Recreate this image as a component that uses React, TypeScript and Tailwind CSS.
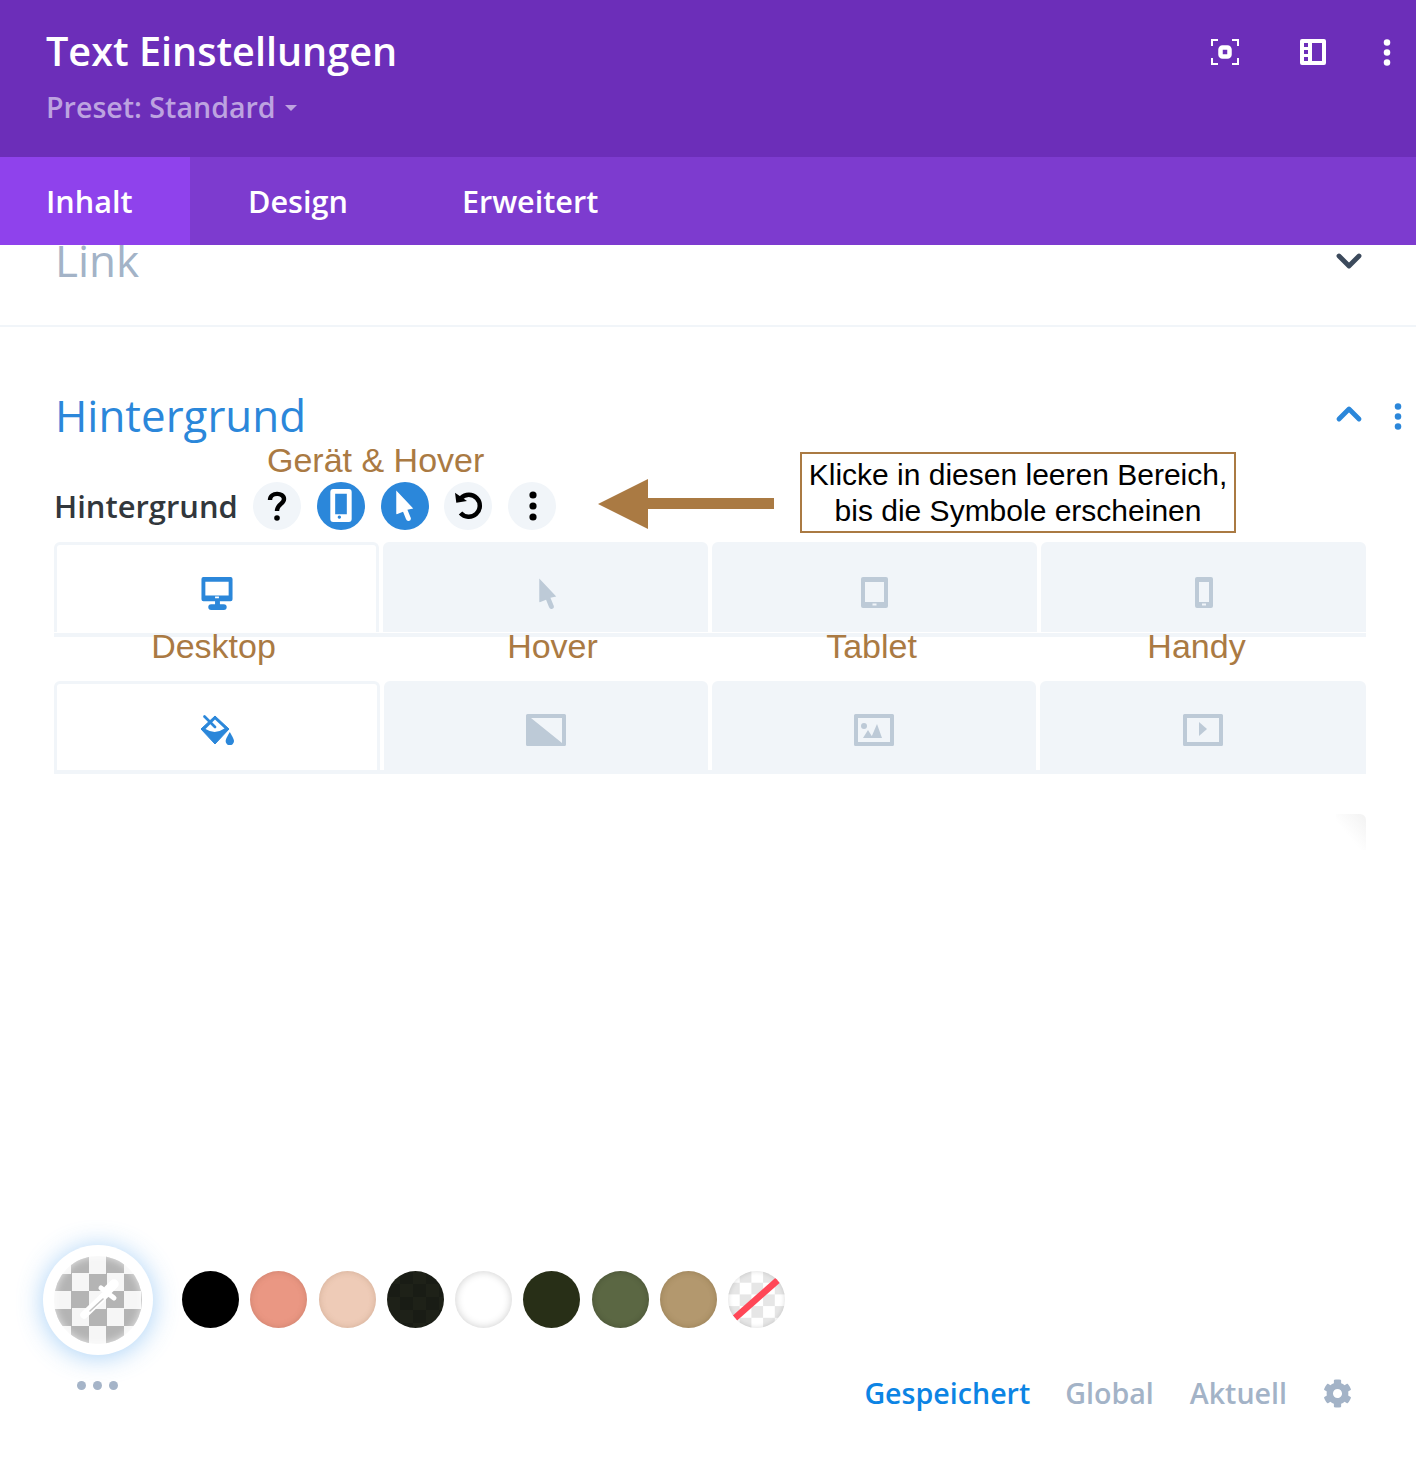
import { ChevronDown, ChevronUp } from 'lucide-react';
import { FaCog } from 'react-icons/fa';

const swatches = [
  { color: 'bg-[#000000]', shadow: '' },
  { color: 'bg-[#ea9783]', shadow: 'shadow-[inset_0_0_6px_rgba(150,90,70,0.35)]' },
  { color: 'bg-[#eecbb7]', shadow: 'shadow-[inset_0_0_6px_rgba(150,110,80,0.3)]' },
  { color: 'bg-[conic-gradient(#191c15_25%,#1e2118_0_50%,#191c15_0_75%,#1e2118_0)] bg-[length:26px_26px]', shadow: '' },
  { color: 'bg-[#ffffff]', shadow: 'shadow-[inset_0_0_8px_rgba(0,0,0,0.2)]' },
  { color: 'bg-[#282f17]', shadow: '' },
  { color: 'bg-[#5b6743]', shadow: 'shadow-[inset_0_0_6px_rgba(0,0,0,0.2)]' },
  { color: 'bg-[#b3986e]', shadow: 'shadow-[inset_0_0_6px_rgba(90,70,30,0.3)]' },
];

function Dots({ className }: { className: string }) {
  return (
    <svg viewBox="0 0 8 30" className={className} fill="currentColor">
      <circle cx="4" cy="4" r="3.6" />
      <circle cx="4" cy="15" r="3.6" />
      <circle cx="4" cy="26" r="3.6" />
    </svg>
  );
}

function CursorIcon({ className }: { className: string }) {
  return (
    <svg viewBox="0 0 20 34" className={className} fill="currentColor">
      <path d="M1 1.5 L18.5 20 L12.5 21.5 L16 30 Q16.5 32.5 14 33 Q12 33.5 11 31 L8 23.5 L1.5 26 Q1 26 1 25 Z" />
    </svg>
  );
}

function GreyFrame({ children }: { children: React.ReactNode }) {
  return (
    <svg viewBox="0 0 40 32" className="h-8 w-10 text-[#bdcad7]" fill="currentColor">
      <path fillRule="evenodd" d="M1.5 0h37A1.5 1.5 0 0 1 40 1.5v29a1.5 1.5 0 0 1-1.5 1.5h-37A1.5 1.5 0 0 1 0 30.5v-29A1.5 1.5 0 0 1 1.5 0ZM4 4v24h32V4Z" />
      {children}
    </svg>
  );
}

export default function App() {
  return (
    <div className="h-[1464px] w-full relative overflow-hidden bg-white font-['Open_Sans',sans-serif]">
      {/* Header */}
      <header className="h-[157px] bg-[#6c2eb9] pl-[46px] pr-[25px] flex justify-between">
        <div>
          <h1 className="mt-[25px] text-[39.6px] leading-[52px] font-semibold text-white">Text Einstellungen</h1>
          <div className="mt-[11px] flex items-center text-[28.6px] leading-[38px] font-semibold text-[#bda3e0]">
            Preset: Standard
            <span className="ml-[9px] mt-[1px] h-0 w-0 border-x-[6px] border-t-[6px] border-x-transparent border-t-[#bda3e0]" />
          </div>
        </div>
        <div className="mt-[38px] flex h-[28px] items-center text-white">
          <svg viewBox="0 0 28 28" className="h-[28px] w-[28px]" fill="none" stroke="currentColor" strokeWidth="2">
            <path d="M1 8V2h6M21 2h6v6M27 20v6h-6M7 26H1v-6" />
            <rect x="9.5" y="9.5" width="9" height="9" rx="2" strokeWidth="4.5" />
          </svg>
          <svg viewBox="0 0 28 28" className="ml-[60px] h-[28px] w-[28px]" fill="currentColor">
            <path fillRule="evenodd" d="M3 1h22a2 2 0 0 1 2 2v22a2 2 0 0 1-2 2H3a2 2 0 0 1-2-2V3a2 2 0 0 1 2-2Zm2 4v4h4V5Zm0 7v4h4v-4Zm0 7v4h4v-4Zm8-14v18h10V5Z" />
          </svg>
          <Dots className="ml-[56px] h-[27px] w-[8px]" />
        </div>
      </header>

      {/* Tabs */}
      <nav className="h-[88px] bg-[#7d3bcf] flex text-[30.6px] font-semibold text-white">
        <div className="w-[190px] bg-[#8f42ec] pl-[46px] leading-[88px]">Inhalt</div>
        <div className="ml-[58px] leading-[88px]">Design</div>
        <div className="ml-[114px] leading-[88px]">Erweitert</div>
      </nav>

      {/* Link section */}
      <section className="h-[82px] overflow-hidden border-b-2 border-[#f1f5f9] pl-[55px] pr-[50px] flex justify-between">
        <span className="-mt-[15px] text-[44px] leading-[60px] text-[#a3b3c7]">Link</span>
        <ChevronDown className="-mr-[3px] -mt-[4px] h-[40px] w-[40px] text-[#3c4a5c]" strokeWidth={2.9} />
      </section>

      {/* Background section */}
      <section className="pl-[54px] pr-[50px]">
        <div className="mt-[62px] flex h-[52px] items-center justify-between">
          <h2 className="ml-[1px] text-[43.9px] leading-[52px] text-[#2b87da]">Hintergrund</h2>
          <div className="flex items-center">
            <ChevronUp className="mb-[2px] h-[40px] w-[40px] text-[#2b87da]" strokeWidth={2.9} />
            <Dots className="-mr-[36px] ml-[25px] mt-[2px] h-[27px] w-[8px] text-[#2b87da]" />
          </div>
        </div>

        <div className="mt-[40px] flex h-[49px] items-center">
          <span className="mt-[2px] w-[199px] text-[30.9px] font-semibold text-[#32373c]">Hintergrund</span>
          <div className="flex gap-[16px]">
            <div className="flex h-[48px] w-[48px] items-center justify-center rounded-full bg-[#f1f5f9] text-black">
              <svg viewBox="0 0 20 30" className="h-[30px] w-[20px]" fill="none" stroke="currentColor" strokeWidth="4.4">
                <path d="M3 9C3 1 17 1 17 8c0 5-7 5-7 12" />
                <circle cx="10" cy="27" r="2.8" fill="currentColor" stroke="none" />
              </svg>
            </div>
            <div className="flex h-[48px] w-[48px] items-center justify-center rounded-full bg-[#2b87da] text-white">
              <svg viewBox="0 0 22 34" className="h-[33px] w-[22px]" fill="currentColor">
                <path fillRule="evenodd" d="M3 0h16a3 3 0 0 1 3 3v28a3 3 0 0 1-3 3H3a3 3 0 0 1-3-3V3a3 3 0 0 1 3-3Zm2 5v21h12V5Zm6 24a1.7 1.7 0 1 0 0 .01Z" />
              </svg>
            </div>
            <div className="flex h-[48px] w-[48px] items-center justify-center rounded-full bg-[#2b87da] text-white">
              <CursorIcon className="h-[33px] w-[20px]" />
            </div>
            <div className="-ml-[1px] flex h-[48px] w-[48px] items-center justify-center rounded-full bg-[#f1f5f9] pl-[1px] text-black">
              <svg viewBox="0 0 28 28" className="h-[28px] w-[28px]" fill="none" stroke="currentColor" strokeWidth="4.5">
                <path d="M6 6A11 11 0 1 1 5.5 21" />
                <path d="M0 .7l1.3 10L12 9Z" fill="currentColor" stroke="none" />
              </svg>
            </div>
            <div className="flex h-[48px] w-[48px] items-center justify-center rounded-full bg-[#f1f5f9] pl-[1px] text-black">
              <Dots className="h-[30px] w-[8px]" />
            </div>
          </div>
        </div>

        {/* Device tabs */}
        <div className="mt-[12px] grid grid-cols-4 gap-[4px] border-b-4 border-[#f1f5f9] pb-[1px]">
          <div className="flex h-[90px] justify-center rounded-t-md border-[3px] border-b-0 border-[#f1f5f9] bg-white pt-[32px] text-[#2b87da]">
            <svg viewBox="0 0 32 34" className="h-[33px] w-[32px]" fill="currentColor">
              <path fillRule="evenodd" d="M2 0h28a2 2 0 0 1 2 2v21a2 2 0 0 1-2 2H19v3h4q3 0 3 3t-3 3H10q-3 0-3-3t3-3h4v-3H2a2 2 0 0 1-2-2V2a2 2 0 0 1 2-2Zm2 5v14h24V5Zm10 17h4v-2h-4Z" />
            </svg>
          </div>
          <div className="flex h-[90px] justify-center rounded-t-md bg-[#f1f5f9] pl-[4px] pt-[35px] text-[#bdcad7]">
            <CursorIcon className="h-[33px] w-[20px]" />
          </div>
          <div className="flex h-[90px] justify-center rounded-t-md bg-[#f1f5f9] pt-[35px] text-[#bdcad7]">
            <svg viewBox="0 0 27 31" className="h-[31px] w-[27px]" fill="currentColor">
              <path fillRule="evenodd" d="M2 0h23a2 2 0 0 1 2 2v27a2 2 0 0 1-2 2H2a2 2 0 0 1-2-2V2a2 2 0 0 1 2-2Zm2 5v20h19V5Zm7.5 21.5v2h4v-2Z" />
            </svg>
          </div>
          <div className="flex h-[90px] justify-center rounded-t-md bg-[#f1f5f9] pt-[35px] text-[#bdcad7]">
            <svg viewBox="0 0 18 31" className="h-[31px] w-[18px]" fill="currentColor">
              <path fillRule="evenodd" d="M2 0h14a2 2 0 0 1 2 2v27a2 2 0 0 1-2 2H2a2 2 0 0 1-2-2V2a2 2 0 0 1 2-2Zm2 5v20h10V5Zm3 21.5v2h4v-2Z" />
            </svg>
          </div>
        </div>

        {/* Annotated labels */}
        <div className="-mt-[8px] grid h-[52px] grid-cols-4 gap-[4px] text-center font-['Liberation_Sans',sans-serif] text-[34px] leading-[34px] text-[#aa7a43]">
          <span className="relative -left-[3px]">Desktop</span>
          <span className="relative left-[7px]">Hover</span>
          <span className="relative -left-[3px]">Tablet</span>
          <span className="relative -left-[7px]">Handy</span>
        </div>

        {/* Background type tabs */}
        <div className="grid grid-cols-[326px_324px_324px_326px] gap-[4px] border-b-4 border-[#f1f5f9]">
          <div className="flex h-[89px] justify-center rounded-t-md border-[3px] border-b-0 border-[#f1f5f9] bg-white pt-[31px] text-[#2b87da]">
            <svg viewBox="0 0 33 30" className="h-[30px] w-[33px]" fill="currentColor">
              <path d="M14 1 28 14 14 29 0 14Z" stroke="currentColor" strokeWidth="1" strokeLinejoin="round" />
              <path d="M4.5 14 14 4.5 23.5 13.5Q14 20 4.5 14Z" fill="white" />
              <path d="M3.5 1.5 14 12" fill="none" stroke="currentColor" strokeWidth="2.6" strokeLinecap="round" />
              <path d="M28.8 17Q33 24 33 26a4.2 4.2 0 0 1-8.4 0Q24.6 24 28.8 17Z" />
            </svg>
          </div>
          <div className="flex h-[89px] justify-center rounded-t-md bg-[#f1f5f9] pt-[33px] pr-[1px]">
            <svg viewBox="0 0 40 32" className="h-8 w-10 text-[#bdcad7]" fill="currentColor">
              <path fillRule="evenodd" d="M1.5 0h37A1.5 1.5 0 0 1 40 1.5v29a1.5 1.5 0 0 1-1.5 1.5h-37A1.5 1.5 0 0 1 0 30.5v-29A1.5 1.5 0 0 1 1.5 0ZM5 4l31 25V4Z" />
            </svg>
          </div>
          <div className="flex h-[89px] justify-center rounded-t-md bg-[#f1f5f9] pt-[33px]">
            <GreyFrame>
              <circle cx="10" cy="12" r="3" />
              <path d="M9 24l5-8 5 8ZM17 24l6-14 5 14Z" />
            </GreyFrame>
          </div>
          <div className="flex h-[89px] justify-center rounded-t-md bg-[#f1f5f9] pt-[33px]">
            <GreyFrame>
              <path d="M16 9l8 7-8 7Z" transform="translate(0 -1)" />
            </GreyFrame>
          </div>
        </div>

        <div className="ml-auto mt-[40px] h-[36px] w-[30px] rounded-tr-md bg-[linear-gradient(to_bottom_left,#f2f2f2,#ffffff_60%)]" />
      </section>

      {/* Color palette */}
      <div className="absolute inset-x-0 top-[1245px]">
        <div className="flex items-center pl-[43px]">
          <div className="flex h-[110px] w-[110px] items-center justify-center rounded-full bg-white shadow-[0_2px_26px_rgba(60,150,235,0.45)]">
            <div className="relative flex h-[88px] w-[88px] items-center justify-center rounded-full bg-[conic-gradient(#b4b4b4_25%,#f6f6f6_0_50%,#b4b4b4_0_75%,#f6f6f6_0)] bg-[length:35px_35px] shadow-[inset_0_0_8px_rgba(255,255,255,0.7)]">
              <svg viewBox="0 0 60 60" className="h-[60px] w-[60px]" fill="none" stroke="white" strokeLinecap="round">
                <path d="M39 23 16 45" strokeWidth="7.5" />
                <path d="M35 29 22 41" stroke="#c4c4c4" strokeWidth="1.6" />
                <path d="M33 18l13 10" strokeWidth="5" />
                <path d="M40 20l6-6" strokeWidth="9.5" />
              </svg>
            </div>
          </div>
          <div className="mb-[1px] ml-[29px] flex gap-[11.25px]">
            {swatches.map((s) => (
              <div key={s.color} className={`h-[57px] w-[57px] rounded-full ${s.color} ${s.shadow}`} />
            ))}
            <div className="relative h-[57px] w-[57px] overflow-hidden rounded-full bg-[conic-gradient(#e6e6e6_25%,#ffffff_0_50%,#e6e6e6_0_75%,#ffffff_0)] bg-[length:23.4px_23.4px] shadow-[inset_0_0_5px_rgba(0,0,0,0.15)]">
              <svg viewBox="0 0 57 57" className="h-[57px] w-[57px]" stroke="#ff4757" strokeWidth="6.5">
                <path d="M7 47 50 9" />
              </svg>
            </div>
          </div>
        </div>

        <div className="flex items-start justify-between pl-[77px] pr-[64px]">
          <div className="mt-[26px] flex gap-[7px]">
            <span className="h-[9px] w-[9px] rounded-full bg-[#a5b4c8]" />
            <span className="h-[9px] w-[9px] rounded-full bg-[#a5b4c8]" />
            <span className="h-[9px] w-[9px] rounded-full bg-[#a5b4c8]" />
          </div>
          <div className="mt-[19px] flex items-center text-[28.6px] leading-[38px] font-semibold text-[#a3b3c7]">
            <span className="text-[#0c84e4]">Gespeichert</span>
            <span className="ml-[35px]">Global</span>
            <span className="ml-[36px]">Aktuell</span>
            <FaCog className="ml-[36px] h-[29px] w-[29px] text-[#a3b3c7]" />
          </div>
        </div>
      </div>

      {/* Annotations */}
      <span className="absolute left-[267px] top-[440px] font-['Liberation_Sans',sans-serif] text-[34px] leading-[40px] text-[#aa7a43]">Gerät &amp; Hover</span>
      <svg viewBox="0 0 176 50" className="absolute left-[598px] top-[479px] h-[50px] w-[176px]" fill="#aa7a43">
        <path d="M0 25L50 0V19H176V30H50V50Z" />
      </svg>
      <div className="absolute left-[800px] top-[452px] h-[81px] w-[436px] border-2 border-[#aa7a43] bg-white pt-[3px] text-center font-['Liberation_Sans',sans-serif] text-[30px] leading-[36px] text-black">
        Klicke in diesen leeren Bereich,
        <br />
        bis die Symbole erscheinen
      </div>
    </div>
  );
}
